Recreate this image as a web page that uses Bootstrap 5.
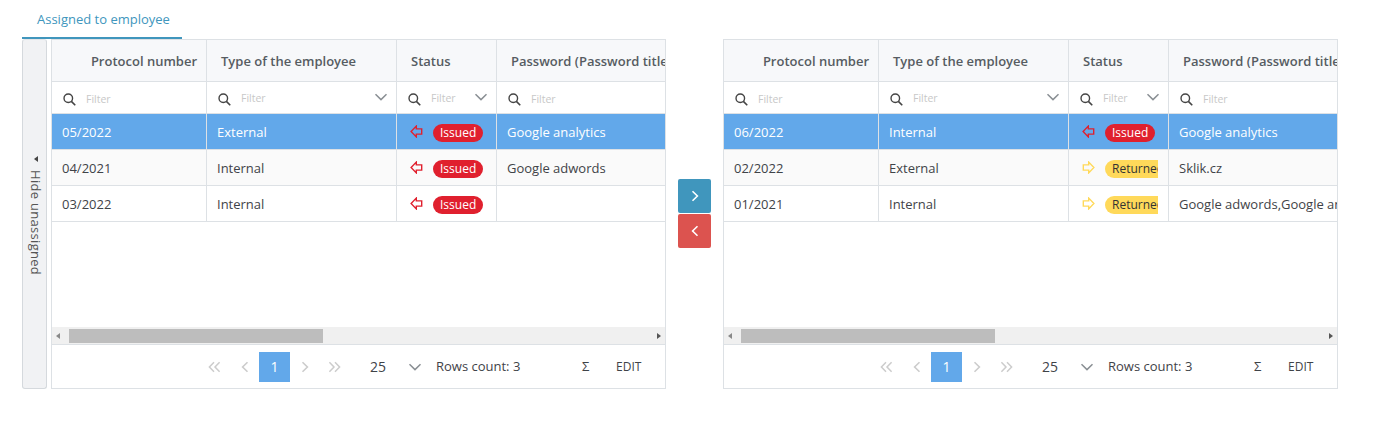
<!DOCTYPE html>
<html lang="en"><head><meta charset="utf-8"><title>Assigned to employee</title>
<link href="https://cdn.jsdelivr.net/npm/bootstrap@5.3.0/dist/css/bootstrap.min.css" rel="stylesheet">
<style>
html,body{height:100%;overflow:hidden}
body{font-family:"Open Sans",sans-serif;font-size:13px;color:#3a3f44;background:#fff}
.page-wrap{padding:0 0 0 22px;width:1338px}
.tab-row{height:39px;border:0}
.tab-link{display:block;width:160px;height:39px;padding:10px 15px 0;color:#4096bd;font-size:13px;line-height:19px;border-bottom:2px solid #4096bd;text-decoration:none;white-space:nowrap}
.tab-link:hover{color:#4096bd}
.work{height:350px}
.side-toggle{width:25px;height:350px;background:#f1f2f4;border:1px solid #d5d9dd;border-top-color:#e3e6e9;border-radius:3px;color:#555;margin-right:4px;font-size:13px;letter-spacing:.3px;padding:4px 0 0 2px}
.side-toggle span{writing-mode:vertical-rl;line-height:1;margin-top:8px}
.tri-left{width:0;height:0;border-top:3px solid transparent;border-bottom:3px solid transparent;border-right:4px solid #444}
.grid-box{width:615px;height:350px;border:1px solid #dde1e5;overflow:hidden;background:#fff}
.grid-body{height:287px;overflow:hidden}
.grid-tab{table-layout:fixed;width:800px;border-collapse:separate;border-spacing:0;margin:0}
.grid-tab th,.grid-tab td{border-right:1px solid #dde1e5;border-bottom:1px solid #dde1e5;padding:0;overflow:hidden;white-space:nowrap;font-size:13px}
.w0{width:155px}.w1{width:190px}.w2{width:100px}.w3{width:355px}
.head-row th{height:42px;background:#f7f8fa;font-weight:600;color:#565c62;padding:2px 14px 0}
.head-row th.head-end{text-align:right;padding:2px 9px 0 0}
.filter-row td{height:32px;background:#fff}
.filter-wrap{display:flex;align-items:center;padding:4px 8px 0 11px;height:31px}
.filter-text{font-size:10.5px;color:#c8c8c8;margin-left:10px;flex:1}
.filter-text.up{position:relative;top:-1px}
.filter-wrap .chev{flex:none;margin-top:-5px}
.data-row td{height:36px;padding:2px 10px 0;color:#3f4348}
.data-row.alt td{background:#fafafa}
.data-row.picked td{background:#62a8ea;color:#fff;font-weight:500}
.status-wrap{display:flex;align-items:center;overflow:hidden;margin-left:3px}
.status-wrap svg{flex:none;margin-right:10px;margin-top:-2px}
.tone-red{color:#e0202e}
.tone-yellow{color:#ffd95a}
.pill{display:inline-block;flex:none;font-size:12px;line-height:18px;height:18px;border-radius:9px;padding:0 7px;font-weight:500}
.pill-red{background:#e0202e;color:#fff}
.pill-yellow{background:#ffd95a;color:#333;padding:0 7px;font-weight:400}
.hscroll{height:18px;background:#f0f0f0;border-bottom:1px solid #dde1e5;padding:1px 0}
.hs-thumb{width:254px;height:14px;background:#bdbdbd;margin-left:5px}
.hs-cap{width:12px;display:flex;align-items:center;justify-content:center;height:14px}
.tri-right{width:0;height:0;border-top:3.5px solid transparent;border-bottom:3.5px solid transparent;border-left:4px solid #555}
.tri-l2{width:0;height:0;border-top:3.5px solid transparent;border-bottom:3.5px solid transparent;border-right:4px solid #888}
.foot{height:43px;padding-left:147px;color:#3f4348;font-size:13px}
.pager{margin:0;--bs-pagination-border-width:0}
.pager .page-link{width:31px;height:30px;padding:0;background:transparent;border:0;color:#ccc;display:flex;align-items:center;justify-content:center;font-size:14px;border-radius:0}
.pager .active .page-link{background:#62a8ea;color:#fff}
.page-size{font-size:14px;width:15px;margin-left:20px;line-height:1;margin-right:0}
.foot-chev{margin-left:23px;margin-right:14px}
.rows-count{width:84px;white-space:nowrap;flex:none;font-size:13px}
.sum-mark{margin-left:62px;width:34px;font-size:13px}
.edit-mark{font-size:12px}
.move-col{width:57px;padding:140px 0 0 12px;gap:1px}
.move-btn{width:33px;height:34px;padding:0;border:0;border-radius:2px;display:flex;align-items:center;justify-content:center}
.move-go{background:#4096bd}
.move-back{background:#dc534f}
</style></head><body>
<svg width="0" height="0" class="d-none"><defs>
<symbol id="mag" viewBox="0 0 14 14"><circle cx="5.7" cy="5.7" r="4.6" fill="none" stroke="#444" stroke-width="1.5"/><path d="M9 9 13.2 13.2" stroke="#444" stroke-width="1.7" fill="none"/></symbol>
<symbol id="chv" viewBox="0 0 14 8"><path d="M1.5 1.2 7 6.6 12.5 1.2" fill="none" stroke="#8a8f94" stroke-width="1.5"/></symbol>
<symbol id="outl" viewBox="0 0 14 14"><path d="M1.2 7 6.8 1.2V4.2H12.6V9.8H6.8V12.8Z" fill="none" stroke="currentColor" stroke-width="1.5"/></symbol>
<symbol id="outr" viewBox="0 0 14 14"><path d="M12.8 7 7.2 1.2V4.2H1.4V9.8H7.2V12.8Z" fill="none" stroke="currentColor" stroke-width="1.5"/></symbol>
<symbol id="p-l" viewBox="0 0 8 12"><path d="M6.5 1.2 1.6 6 6.5 10.8" fill="none" stroke="currentColor" stroke-width="1.6"/></symbol>
<symbol id="p-r" viewBox="0 0 8 12"><path d="M1.5 1.2 6.4 6 1.5 10.8" fill="none" stroke="currentColor" stroke-width="1.6"/></symbol>
<symbol id="p-ll" viewBox="0 0 13 12"><path d="M6 1.2 1.4 6 6 10.8M11.6 1.2 7 6 11.6 10.8" fill="none" stroke="currentColor" stroke-width="1.5"/></symbol>
<symbol id="p-rr" viewBox="0 0 13 12"><path d="M1.4 1.2 6 6 1.4 10.8M7 1.2 11.6 6 7 10.8" fill="none" stroke="currentColor" stroke-width="1.5"/></symbol>
</defs></svg>
<div class="page-wrap">
<ul class="nav tab-row"><li class="nav-item"><a class="tab-link" href="#">Assigned to employee</a></li></ul>
<div class="d-flex work">
<button type="button" class="side-toggle d-flex flex-column align-items-center justify-content-center"><i class="tri-left"></i><span>Hide unassigned</span></button>

<div class="grid-box d-flex flex-column">
<div class="grid-body"><table class="grid-tab"><colgroup><col class="w0"><col class="w1"><col class="w2"><col class="w3"></colgroup>
<thead><tr class="head-row"><th class="head-end">Protocol number</th><th>Type of the employee</th><th>Status</th><th>Password (Password title)</th></tr>
<tr class="filter-row"><td><div class="filter-wrap"><svg width="13" height="13"><use href="#mag"/></svg><span class="filter-text">Filter</span></div></td>
<td><div class="filter-wrap"><svg width="13" height="13"><use href="#mag"/></svg><span class="filter-text up">Filter</span><svg class="chev" width="14" height="8"><use href="#chv"/></svg></div></td>
<td><div class="filter-wrap"><svg width="13" height="13"><use href="#mag"/></svg><span class="filter-text up">Filter</span><svg class="chev" width="14" height="8"><use href="#chv"/></svg></div></td>
<td><div class="filter-wrap"><svg width="13" height="13"><use href="#mag"/></svg><span class="filter-text">Filter</span></div></td></tr></thead>
<tbody>
<tr class="data-row picked"><td>05/2022</td><td>External</td><td><div class="status-wrap tone-red"><svg width="13" height="13"><use href="#outl"/></svg><span class="pill pill-red">Issued</span></div></td><td>Google analytics</td></tr>
<tr class="data-row alt"><td>04/2021</td><td>Internal</td><td><div class="status-wrap tone-red"><svg width="13" height="13"><use href="#outl"/></svg><span class="pill pill-red">Issued</span></div></td><td>Google adwords</td></tr>
<tr class="data-row"><td>03/2022</td><td>Internal</td><td><div class="status-wrap tone-red"><svg width="13" height="13"><use href="#outl"/></svg><span class="pill pill-red">Issued</span></div></td><td></td></tr>
</tbody></table></div>
<div class="hscroll d-flex align-items-center"><div class="hs-cap"><i class="tri-l2"></i></div><div class="hs-thumb"></div><div class="hs-cap ms-auto"><i class="tri-right"></i></div></div>
<div class="foot d-flex align-items-center">
<ul class="pagination pager"><li class="page-item"><a class="page-link" href="#"><svg width="13" height="12"><use href="#p-ll"/></svg></a></li><li class="page-item"><a class="page-link" href="#"><svg width="8" height="12"><use href="#p-l"/></svg></a></li><li class="page-item active"><a class="page-link" href="#">1</a></li><li class="page-item"><a class="page-link" href="#"><svg width="8" height="12"><use href="#p-r"/></svg></a></li><li class="page-item"><a class="page-link" href="#"><svg width="13" height="12"><use href="#p-rr"/></svg></a></li></ul>
<span class="page-size">25</span><svg class="foot-chev" width="14" height="8"><use href="#chv"/></svg><span class="rows-count">Rows count: 3</span><span class="sum-mark">Σ</span><span class="edit-mark">EDIT</span>
</div></div>

<div class="move-col d-flex flex-column">
<button type="button" class="move-btn move-go text-white"><svg width="8" height="12"><use href="#p-r"/></svg></button>
<button type="button" class="move-btn move-back text-white"><svg width="8" height="12"><use href="#p-l"/></svg></button>
</div>

<div class="grid-box d-flex flex-column">
<div class="grid-body"><table class="grid-tab"><colgroup><col class="w0"><col class="w1"><col class="w2"><col class="w3"></colgroup>
<thead><tr class="head-row"><th class="head-end">Protocol number</th><th>Type of the employee</th><th>Status</th><th>Password (Password title)</th></tr>
<tr class="filter-row"><td><div class="filter-wrap"><svg width="13" height="13"><use href="#mag"/></svg><span class="filter-text">Filter</span></div></td>
<td><div class="filter-wrap"><svg width="13" height="13"><use href="#mag"/></svg><span class="filter-text up">Filter</span><svg class="chev" width="14" height="8"><use href="#chv"/></svg></div></td>
<td><div class="filter-wrap"><svg width="13" height="13"><use href="#mag"/></svg><span class="filter-text up">Filter</span><svg class="chev" width="14" height="8"><use href="#chv"/></svg></div></td>
<td><div class="filter-wrap"><svg width="13" height="13"><use href="#mag"/></svg><span class="filter-text">Filter</span></div></td></tr></thead>
<tbody>
<tr class="data-row picked"><td>06/2022</td><td>Internal</td><td><div class="status-wrap tone-red"><svg width="13" height="13"><use href="#outl"/></svg><span class="pill pill-red">Issued</span></div></td><td>Google analytics</td></tr>
<tr class="data-row alt"><td>02/2022</td><td>External</td><td><div class="status-wrap tone-yellow"><svg width="13" height="13"><use href="#outr"/></svg><span class="pill pill-yellow">Returned</span></div></td><td>Sklik.cz</td></tr>
<tr class="data-row"><td>01/2021</td><td>Internal</td><td><div class="status-wrap tone-yellow"><svg width="13" height="13"><use href="#outr"/></svg><span class="pill pill-yellow">Returned</span></div></td><td>Google adwords,Google analytics</td></tr>
</tbody></table></div>
<div class="hscroll d-flex align-items-center"><div class="hs-cap"><i class="tri-l2"></i></div><div class="hs-thumb"></div><div class="hs-cap ms-auto"><i class="tri-right"></i></div></div>
<div class="foot d-flex align-items-center">
<ul class="pagination pager"><li class="page-item"><a class="page-link" href="#"><svg width="13" height="12"><use href="#p-ll"/></svg></a></li><li class="page-item"><a class="page-link" href="#"><svg width="8" height="12"><use href="#p-l"/></svg></a></li><li class="page-item active"><a class="page-link" href="#">1</a></li><li class="page-item"><a class="page-link" href="#"><svg width="8" height="12"><use href="#p-r"/></svg></a></li><li class="page-item"><a class="page-link" href="#"><svg width="13" height="12"><use href="#p-rr"/></svg></a></li></ul>
<span class="page-size">25</span><svg class="foot-chev" width="14" height="8"><use href="#chv"/></svg><span class="rows-count">Rows count: 3</span><span class="sum-mark">Σ</span><span class="edit-mark">EDIT</span>
</div></div>
</div></div>
<script src="https://cdn.jsdelivr.net/npm/bootstrap@5.3.0/dist/js/bootstrap.bundle.min.js"></script>
</body></html>
